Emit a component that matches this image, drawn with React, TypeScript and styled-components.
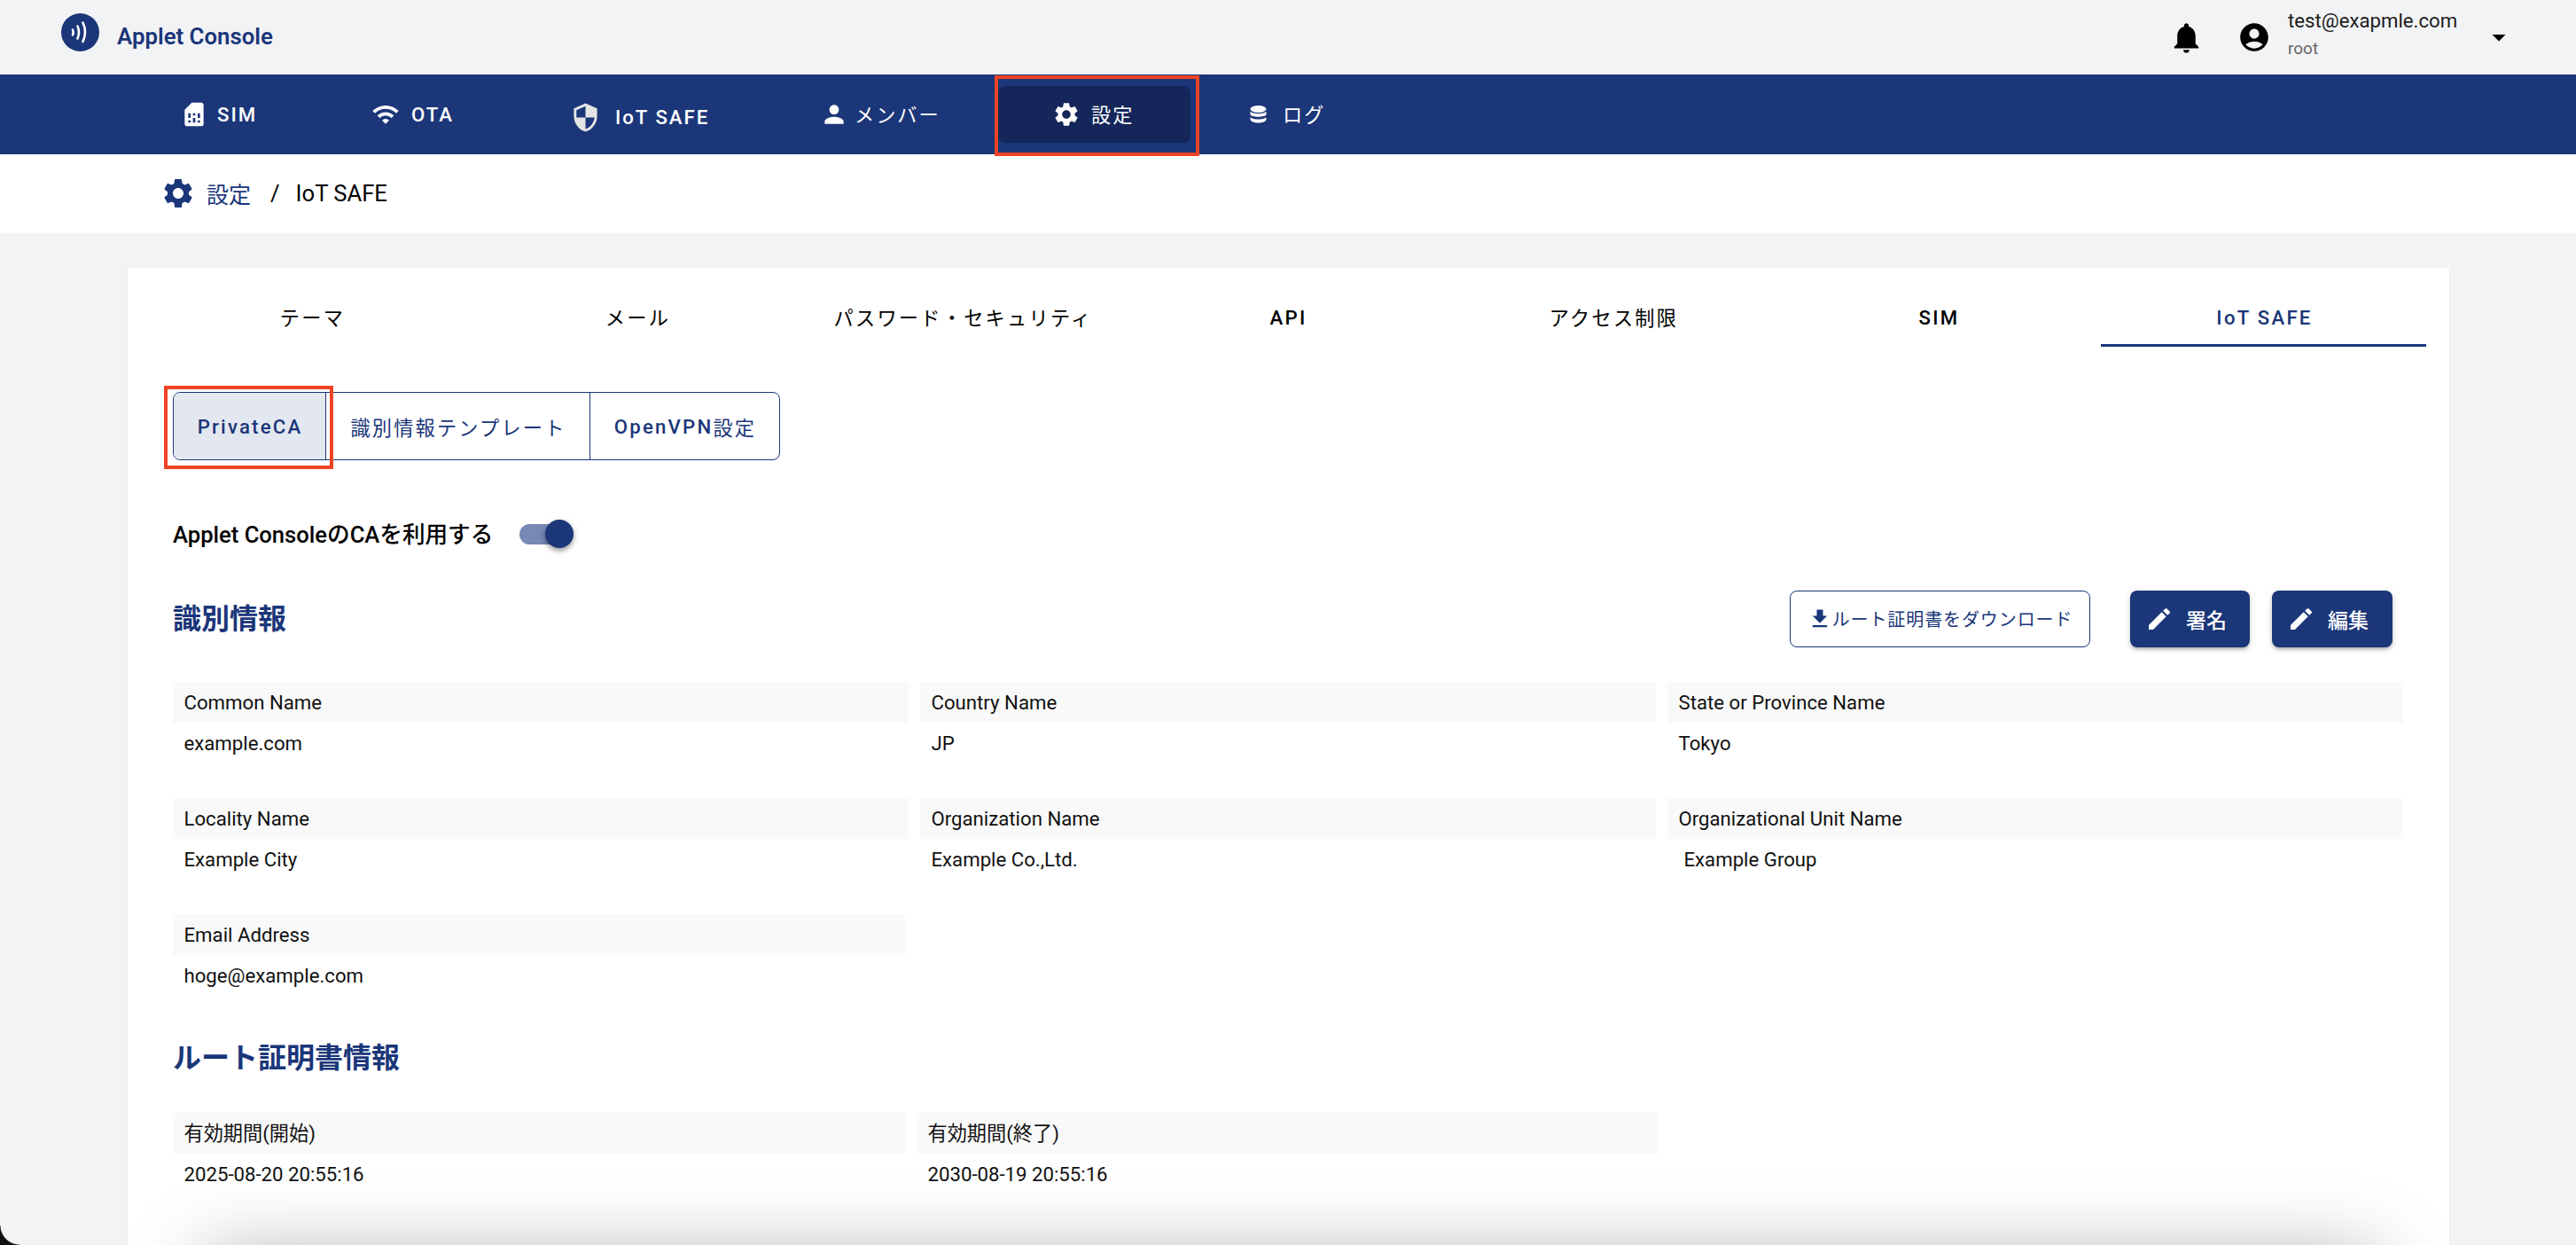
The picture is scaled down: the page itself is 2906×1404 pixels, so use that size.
import React from "react";
import styled, { createGlobalStyle } from "styled-components";
import {
  MdSimCard,
  MdWifi,
  MdSecurity,
  MdPerson,
  MdSettings,
  MdNotifications,
  MdAccountCircle,
  MdArrowDropDown,
  MdEdit,
  MdFileDownload,
} from "react-icons/md";

const NAVY = "#1b3679";
const FONT = `Roboto, "Noto Sans CJK JP", sans-serif`;

const Global = createGlobalStyle`
  html, body { margin: 0; padding: 0; background: #f2f3f5; }
  * { box-sizing: border-box; }
  body { font-family: ${FONT}; }
`;

const Page = styled.div`
  position: relative;
  width: 2906px;
  height: 1404px;
  overflow: hidden;
  background: #f2f3f5;
`;

const Header = styled.header`
  height: 84px;
  display: flex;
  align-items: center;
  justify-content: space-between;
  padding: 0 69px;
`;

const Brand = styled.div`
  display: flex;
  align-items: center;
  gap: 20px;
  margin-top: -11px;
`;

const BrandName = styled.span`
  font-size: 25.8px;
  font-weight: 600;
  color: ${NAVY};
  margin-top: 8px;
`;

const UserArea = styled.div`
  display: flex;
  align-items: center;
  color: #000;
`;

const UserAvatar = styled(MdAccountCircle)`
  margin-left: 37px;
`;

const UserText = styled.div`
  display: flex;
  flex-direction: column;
  margin: -4px 28px 0 19px;
  width: 192px;
`;

const UserMail = styled.span`
  font-size: 22.2px;
  line-height: 28px;
  color: #1c1c1c;
`;

const UserRole = styled.span`
  font-size: 19px;
  line-height: 35px;
  color: #666;
`;

const Nav = styled.nav`
  height: 90px;
  background: ${NAVY};
  display: flex;
  align-items: center;
  padding-left: 140px;
`;

const NavItem = styled.div<{ $w: number; $pad: number; $gap: number; $ml?: number; $drop?: number; $active?: boolean }>`
  position: relative;
  width: ${(p) => p.$w}px;
  height: 64px;
  margin-left: ${(p) => p.$ml ?? 0}px;
  display: flex;
  align-items: center;
  gap: ${(p) => p.$gap}px;
  border-radius: 8px;
  color: #fff;
  background: ${(p) => (p.$active ? "#14265a" : "transparent")};
  padding-left: ${(p) => p.$pad}px;
  padding-top: ${(p) => p.$drop ?? 0}px;
  font-size: 22.2px;
  font-weight: 500;
  letter-spacing: 2px;
  white-space: nowrap;
`;

const JpLabel = styled.span`
  font-weight: 400;
`;

const NavJpLabel = styled(JpLabel)`
  margin-top: -2px;
`;

const Annotation = styled.div<{ $t: number; $r: number; $b: number; $l: number }>`
  position: absolute;
  top: ${(p) => p.$t}px;
  right: ${(p) => p.$r}px;
  bottom: ${(p) => p.$b}px;
  left: ${(p) => p.$l}px;
  border: 4px solid #ee4325;
  pointer-events: none;
  z-index: 2;
`;

const Breadcrumb = styled.div`
  height: 89px;
  background: #fff;
  display: flex;
  align-items: center;
  padding: 0 0 2px 181px;
  font-size: 25.6px;
  color: #000;
`;

const CrumbLink = styled.span`
  color: ${NAVY};
  font-size: 25px;
  margin-left: 12px;
`;

const CrumbSep = styled.span`
  margin: 0 18px 0 22px;
`;

const Card = styled.main`
  margin: 39px 143px 0 144px;
  height: 1200px;
  background: #fff;
  padding: 24px 26px 0 24px;
  box-shadow: 0 0 2px rgba(0, 0, 0, 0.06);
`;

const Tabs = styled.div`
  display: grid;
  grid-template-columns: repeat(7, 1fr);
  height: 65px;
`;

const Tab = styled.div<{ $active?: boolean; $strong?: boolean }>`
  display: flex;
  align-items: center;
  justify-content: center;
  padding: ${(p) => (p.$active || p.$strong ? 2 : 0)}px 0 0 2px;
  font-size: 22.2px;
  letter-spacing: 2.25px;
  font-weight: ${(p) => (p.$active || p.$strong ? 500 : 400)};
  color: ${(p) => (p.$active ? NAVY : "#000")};
  border-bottom: 3px solid ${(p) => (p.$active ? NAVY : "transparent")};
`;

const Body = styled.div`
  padding: 0 26px 0 27px;
`;

const Toggle = styled.div`
  display: inline-flex;
  height: 77px;
  margin-top: 51px;
  border: 1px solid ${NAVY};
  border-radius: 8px;
  vertical-align: top;
`;

const ToggleItem = styled.div<{ $w: number; $active?: boolean; $divider?: boolean }>`
  position: relative;
  width: ${(p) => p.$w}px;
  display: flex;
  align-items: center;
  justify-content: center;
  padding-left: 1px;
  font-size: 22.2px;
  font-weight: 500;
  letter-spacing: 2.2px;
  color: ${NAVY};
  background: ${(p) => (p.$active ? "#e3e7f0" : "transparent")};
  border-radius: ${(p) => (p.$active ? "7px 0 0 7px" : "0")};
  border-left: ${(p) => (p.$divider ? `1px solid ${NAVY}` : "none")};
`;

const SwitchRow = styled.div`
  display: flex;
  align-items: center;
  height: 64px;
  margin-top: 51px;
`;

const SwitchLabel = styled.span`
  margin-top: -3px;
  font-size: 25.6px;
  font-weight: 500;
  color: #000;
`;

const Switch = styled.div`
  position: relative;
  width: 54px;
  height: 23px;
  margin-left: 30px;
  border-radius: 12px;
  background: #7789b5;
`;

const Thumb = styled.div`
  position: absolute;
  top: -5px;
  left: 29px;
  width: 32px;
  height: 32px;
  border-radius: 50%;
  background: ${NAVY};
  box-shadow: 0 3px 5px rgba(0, 0, 0, 0.3), 0 2px 8px rgba(0, 0, 0, 0.16);
`;

const SectionRow = styled.div`
  display: flex;
  align-items: center;
  justify-content: space-between;
  height: 64px;
  margin-top: 32px;
  padding-right: 12px;
`;

const SectionTitle = styled.h2`
  margin: 0;
  font-size: 32px;
  line-height: 62px;
  font-weight: 700;
  color: ${NAVY};
`;

const Actions = styled.div`
  display: flex;
  align-items: center;
`;

const OutlineButton = styled.div`
  width: 339px;
  height: 64px;
  display: flex;
  align-items: center;
  justify-content: center;
  padding-bottom: 1px;
  margin-right: 45px;
  border: 1px solid ${NAVY};
  border-radius: 8px;
  font-size: 20px;
  letter-spacing: 0.9px;
  color: ${NAVY};
  white-space: nowrap;
`;

const SolidButton = styled.div<{ $w: number; $ml?: number }>`
  width: ${(p) => p.$w}px;
  height: 64px;
  margin-left: ${(p) => p.$ml ?? 0}px;
  display: flex;
  align-items: center;
  gap: 14px;
  padding-left: 17px;
  background: ${NAVY};
  color: #fff;
  border-radius: 8px;
  font-size: 23px;
  font-weight: 500;
  box-shadow: 0 3px 3px -2px rgba(0, 0, 0, 0.2), 0 3px 4px 0 rgba(0, 0, 0, 0.14), 0 1px 8px 0 rgba(0, 0, 0, 0.12);
`;

const FieldGrid = styled.div<{ $cols: string; $mt?: number }>`
  display: grid;
  grid-template-columns: ${(p) => p.$cols};
  column-gap: 13px;
  margin-top: ${(p) => p.$mt ?? 0}px;
`;

const Field = styled.div`
  height: 131px;
`;

const FieldLabel = styled.div<{ $w?: number }>`
  width: ${(p) => (p.$w ? `${p.$w}px` : "auto")};
  height: 46px;
  line-height: 46px;
  padding-left: 12.5px;
  background: #f9f9f9;
  font-size: 22.2px;
  color: #111;
`;

const FieldValue = styled.div<{ $indent?: number }>`
  height: 46px;
  line-height: 46px;
  padding-left: ${(p) => 12.5 + (p.$indent ?? 0)}px;
  font-size: 22.2px;
  color: #111;
`;

const BottomShadow = styled.div`
  position: absolute;
  left: 230px;
  right: 226px;
  top: 1420px;
  height: 200px;
  border-radius: 12px;
  background: #fff;
  box-shadow: 0 0 90px rgba(0, 0, 0, 0.35);
  z-index: 3;
`;

const WindowCorner = styled.div`
  position: absolute;
  left: 0;
  bottom: 0;
  width: 22px;
  height: 22px;
  background: radial-gradient(circle at 100% 0, transparent 21px, #111 22px);
  z-index: 4;
`;

const LogoMark = () => (
  <svg width="43" height="43" viewBox="0 0 43 43" aria-hidden="true">
    <circle cx="21.5" cy="21.5" r="21.5" fill={NAVY} />
    <g fill="none" stroke="#fff" strokeWidth="2.6" strokeLinecap="round">
      <path d="M13 18.5Q14.4 21.5 13 24.5" />
      <path d="M18.5 14.5Q21.5 21.5 18.5 28.5" />
      <path d="M24.5 10.5Q29.5 21 24.5 32" />
    </g>
  </svg>
);

const DatabaseIcon = () => (
  <svg width="19" height="20" viewBox="0 0 19 20" fill="#fff" aria-hidden="true">
    <ellipse cx="9.5" cy="4" rx="9" ry="4" />
    <path d="M0.5 6.8C3 10 16 10 18.5 6.8V10C18 13.6 1 13.6 0.5 10Z" />
    <path d="M0.5 13.2C3 16.4 16 16.4 18.5 13.2V15.5C18 20.8 1 20.8 0.5 15.5Z" />
  </svg>
);

const fieldRows = [
  [
    ["Common Name", "example.com"],
    ["Country Name", "JP"],
    ["State or Province Name", "Tokyo"],
  ],
  [
    ["Locality Name", "Example City"],
    ["Organization Name", "Example Co.,Ltd."],
    ["Organizational Unit Name", "Example Group"],
  ],
];

const tabs = [
  { label: "テーマ" },
  { label: "メール" },
  { label: "パスワード・セキュリティ" },
  { label: "API", strong: true },
  { label: "アクセス制限" },
  { label: "SIM", strong: true },
  { label: "IoT SAFE", active: true },
];

export default function App() {
  return (
    <Page>
      <Global />
      <Header>
        <Brand>
          <LogoMark />
          <BrandName>Applet Console</BrandName>
        </Brand>
        <UserArea>
          <MdNotifications size={41} />
          <UserAvatar size={38} />
          <UserText>
            <UserMail>test@exapmle.com</UserMail>
            <UserRole>root</UserRole>
          </UserText>
          <MdArrowDropDown size={36} />
        </UserArea>
      </Header>

      <Nav>
        <NavItem $w={217} $pad={63} $gap={10}>
          <MdSimCard size={32} />
          <span>SIM</span>
        </NavItem>
        <NavItem $w={217} $pad={62} $gap={13}>
          <MdWifi size={32} />
          <span>OTA</span>
        </NavItem>
        <NavItem $w={300} $pad={69} $gap={16} $drop={6}>
          <MdSecurity size={35} color="#e4e4e4" />
          <span>IoT SAFE</span>
        </NavItem>
        <NavItem $w={244} $pad={51} $gap={7}>
          <MdPerson size={32} />
          <NavJpLabel>メンバー</NavJpLabel>
        </NavItem>
        <NavItem $w={217} $pad={61} $gap={12} $ml={8} $active>
          <MdSettings size={32} />
          <NavJpLabel>設定</NavJpLabel>
          <Annotation $t={-12} $r={-10} $b={-15} $l={-4} />
        </NavItem>
        <NavItem $w={220} $pad={67} $gap={18}>
          <DatabaseIcon />
          <NavJpLabel>ログ</NavJpLabel>
        </NavItem>
      </Nav>

      <Breadcrumb>
        <MdSettings size={40} color={NAVY} />
        <CrumbLink>設定</CrumbLink>
        <CrumbSep>/</CrumbSep>
        <span>IoT SAFE</span>
      </Breadcrumb>

      <Card>
        <Tabs>
          {tabs.map((t) => (
            <Tab key={t.label} $active={t.active} $strong={t.strong}>
              {t.label}
            </Tab>
          ))}
        </Tabs>

        <Body>
          <Toggle>
            <ToggleItem $w={171} $active>
              PrivateCA
              <Annotation $t={-8} $r={-9} $b={-11} $l={-11} />
            </ToggleItem>
            <ToggleItem $w={298} $divider>
              <JpLabel>識別情報テンプレート</JpLabel>
            </ToggleItem>
            <ToggleItem $w={214} $divider>
              OpenVPN<JpLabel>設定</JpLabel>
            </ToggleItem>
          </Toggle>

          <SwitchRow>
            <SwitchLabel>Applet ConsoleのCAを利用する</SwitchLabel>
            <Switch>
              <Thumb />
            </Switch>
          </SwitchRow>

          <SectionRow>
            <SectionTitle>識別情報</SectionTitle>
            <Actions>
              <OutlineButton>
                <MdFileDownload size={28} />
                ルート証明書をダウンロード
              </OutlineButton>
              <SolidButton $w={135}>
                <MdEdit size={32} />
                署名
              </SolidButton>
              <SolidButton $w={136} $ml={25}>
                <MdEdit size={32} />
                編集
              </SolidButton>
            </Actions>
          </SectionRow>

          <FieldGrid $cols="830px 830px 830px" $mt={39}>
            {fieldRows.flat().map(([label, value]) => (
              <Field key={label}>
                <FieldLabel>{label}</FieldLabel>
                <FieldValue $indent={label === "Organizational Unit Name" ? 6 : 0}>{value}</FieldValue>
              </Field>
            ))}
            <Field>
              <FieldLabel $w={826}>Email Address</FieldLabel>
              <FieldValue>hoge@example.com</FieldValue>
            </Field>
          </FieldGrid>

          <SectionTitle>ルート証明書情報</SectionTitle>

          <FieldGrid $cols="826px 836px" $mt={31}>
            <Field>
              <FieldLabel>有効期間(開始)</FieldLabel>
              <FieldValue>2025-08-20 20:55:16</FieldValue>
            </Field>
            <Field>
              <FieldLabel>有効期間(終了)</FieldLabel>
              <FieldValue>2030-08-19 20:55:16</FieldValue>
            </Field>
          </FieldGrid>
        </Body>
      </Card>

      <BottomShadow />
      <WindowCorner />
    </Page>
  );
}
